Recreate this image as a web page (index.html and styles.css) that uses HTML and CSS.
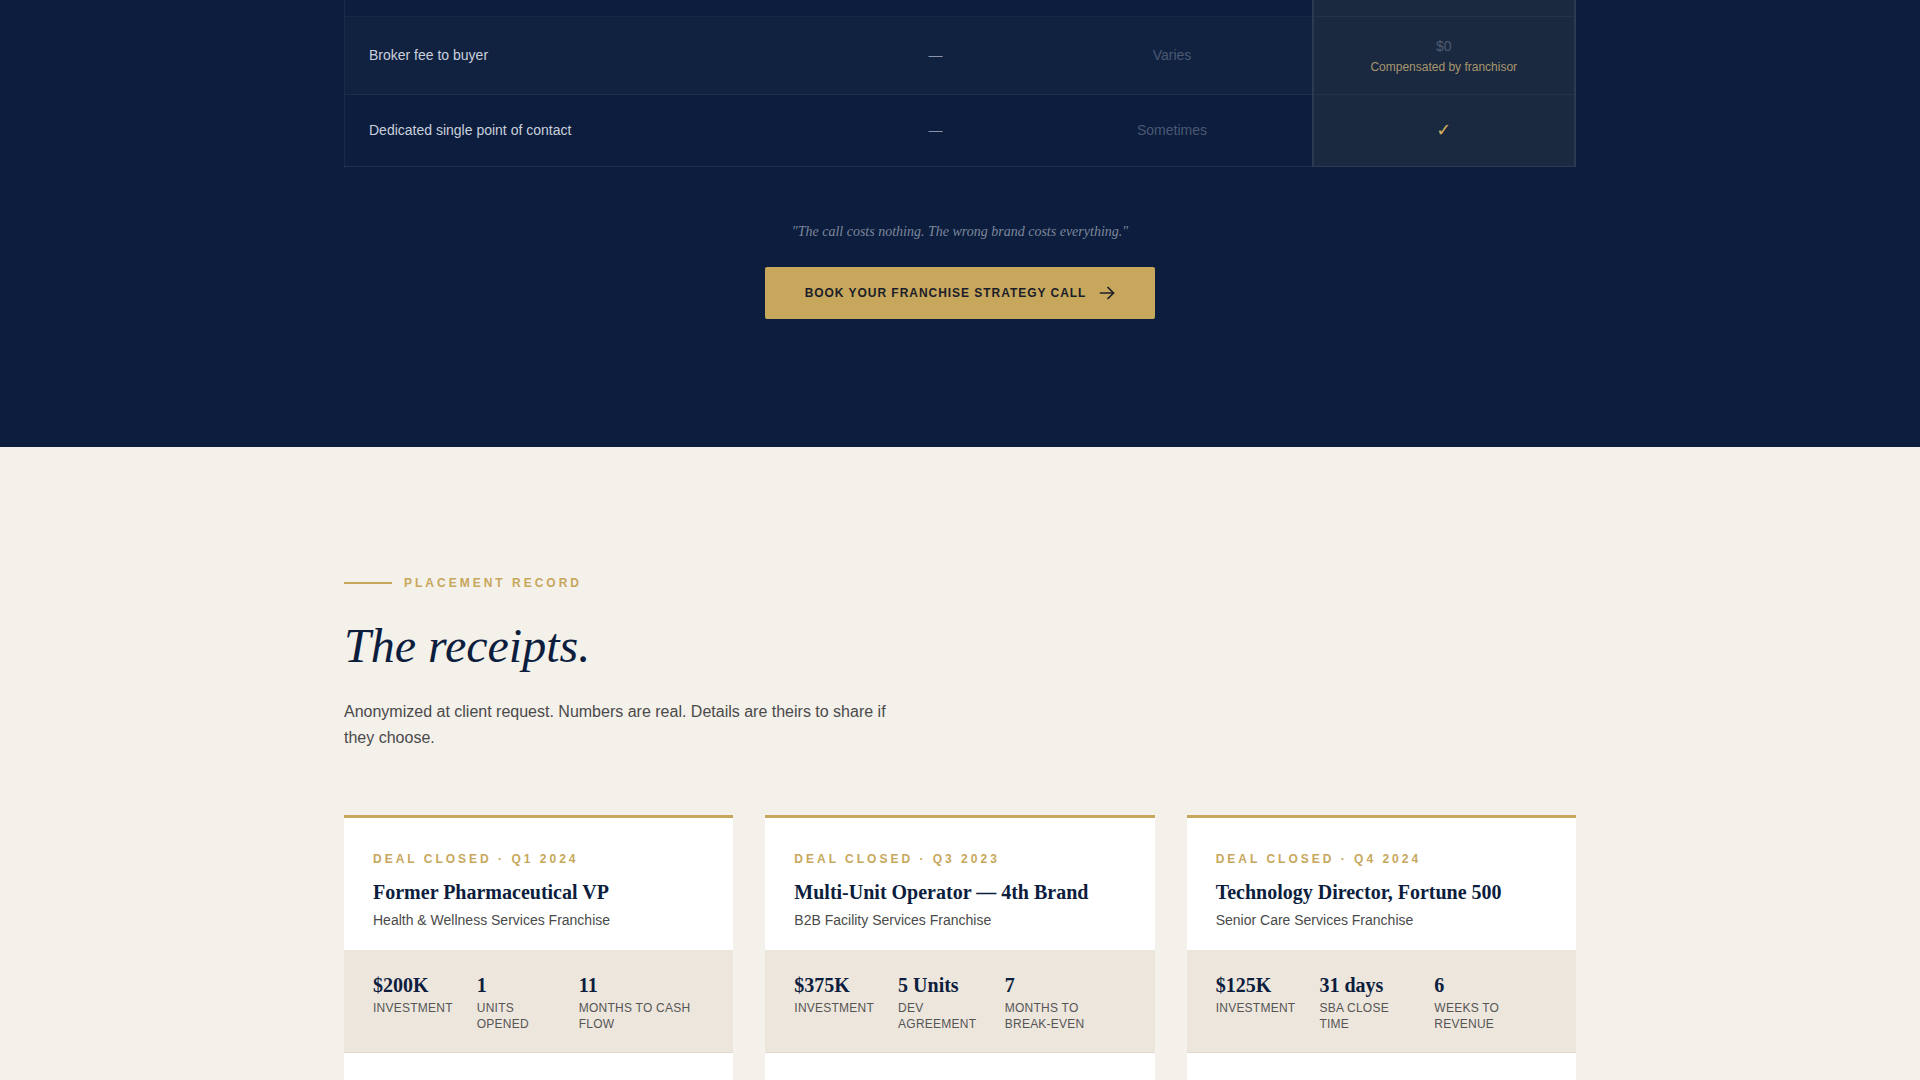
FILE: index.html
```html
<!DOCTYPE html>
<html lang="en">
<head>
  <meta charset="UTF-8" />
  <meta name="viewport" content="width=device-width, initial-scale=1.0"/>
  <title>Franchise Placement | Compare &amp; Record</title>
  <link rel="stylesheet" href="styles.css">
</head>
<body>

  <section class="compare-section">
    <div class="wrap">
      <table class="compare">
        <colgroup>
          <col class="c-label"><col class="c-diy"><col class="c-broker"><col class="c-ours">
        </colgroup>
        <tbody>
          <tr class="lead-in">
            <td></td><td></td><td></td><td class="ours"></td>
          </tr>
          <tr class="alt">
            <td class="label">Broker fee to buyer</td>
            <td class="dash">—</td>
            <td class="dim">Varies</td>
            <td class="ours fee">
              <span class="fee-val">$0</span>
              <span class="fee-note">Compensated by franchisor</span>
            </td>
          </tr>
          <tr>
            <td class="label">Dedicated single point of contact</td>
            <td class="dash">—</td>
            <td class="dim">Sometimes</td>
            <td class="ours"><span class="check">✓</span></td>
          </tr>
        </tbody>
      </table>

      <p class="closing-quote">"The call costs nothing. The wrong brand costs everything."</p>

      <div class="cta-row">
        <a class="cta" href="#book">
          Book your franchise strategy call
          <svg width="16" height="16" viewBox="0 0 16 16" fill="none" stroke="currentColor" stroke-width="1.7" stroke-linecap="round" stroke-linejoin="round">
            <path d="M1.5 8h13"/>
            <path d="M9 2.5L14.5 8 9 13.5"/>
          </svg>
        </a>
      </div>
    </div>
  </section>

  <section class="record-section">
    <div class="wrap">
      <div class="eyebrow"><span class="eyebrow-line"></span>Placement Record</div>
      <h2 class="record-title">The receipts.</h2>
      <p class="record-lead">Anonymized at client request. Numbers are real. Details are theirs to share if they choose.</p>

      <div class="deals">
        <article class="deal">
          <div class="deal-head">
            <div class="deal-tag">Deal Closed · Q1 2024</div>
            <h3 class="deal-title">Former Pharmaceutical VP</h3>
            <div class="deal-sub">Health &amp; Wellness Services Franchise</div>
          </div>
          <div class="deal-stats">
            <div class="stat"><div class="stat-val">$200K</div><div class="stat-label">Investment</div></div>
            <div class="stat"><div class="stat-val">1</div><div class="stat-label">Units opened</div></div>
            <div class="stat"><div class="stat-val">11</div><div class="stat-label">Months to cash flow</div></div>
          </div>
        </article>

        <article class="deal">
          <div class="deal-head">
            <div class="deal-tag">Deal Closed · Q3 2023</div>
            <h3 class="deal-title">Multi-Unit Operator — 4th Brand</h3>
            <div class="deal-sub">B2B Facility Services Franchise</div>
          </div>
          <div class="deal-stats">
            <div class="stat"><div class="stat-val">$375K</div><div class="stat-label">Investment</div></div>
            <div class="stat"><div class="stat-val">5 Units</div><div class="stat-label">Dev agreement</div></div>
            <div class="stat"><div class="stat-val">7</div><div class="stat-label">Months to break-even</div></div>
          </div>
        </article>

        <article class="deal">
          <div class="deal-head">
            <div class="deal-tag">Deal Closed · Q4 2024</div>
            <h3 class="deal-title">Technology Director, Fortune 500</h3>
            <div class="deal-sub">Senior Care Services Franchise</div>
          </div>
          <div class="deal-stats">
            <div class="stat"><div class="stat-val">$125K</div><div class="stat-label">Investment</div></div>
            <div class="stat"><div class="stat-val">31 days</div><div class="stat-label">SBA close time</div></div>
            <div class="stat"><div class="stat-val">6</div><div class="stat-label">Weeks to revenue</div></div>
          </div>
        </article>
      </div>
    </div>
  </section>

</body>
</html>
```

FILE: styles.css
```css
:root {
  --navy: #0c1d3d;
  --gold: #c7a75c;
  --cream: #f4f0ea;
  --band: #ede6dd;
  --ink: #4a4a4a;
}
body {
  margin: 0;
  font-family: "Liberation Sans", Arial, sans-serif;
  color: var(--ink);
  background: var(--cream);
}
.wrap {
  max-width: 1280px;
  margin: 0 auto;
  padding: 0 24px;
  box-sizing: border-box;
}

/* dark comparison block */
.compare-section {
  background: var(--navy);
  padding-bottom: 128px;
}
.compare {
  width: 100%;
  border-collapse: collapse;
  table-layout: fixed;
  border-left: 1px solid rgba(255, 255, 255, 0.06);
  border-bottom: 1px solid rgba(255, 255, 255, 0.09);
}
.c-label { width: 494px; }
.c-diy { width: 194px; }
.c-broker { width: 280px; }
.compare td {
  padding: 24px;
  font-size: 14px;
  line-height: 21px;
  text-align: center;
  vertical-align: middle;
  border-top: 1px solid rgba(255, 255, 255, 0.05);
}
/* tail of the rows above the fold */
.compare tr.lead-in td {
  padding: 0;
  height: 16px;
  border-top: 0;
}
.compare tr.alt td { background: rgba(255, 255, 255, 0.022); }
.compare td.label { text-align: left; color: #c9d0dc; }
.compare td.dash { color: #8a94a8; }
.compare td.dim { color: #4a5872; }
.compare td.ours,
.compare tr.alt td.ours {
  background: #1a2840;
  border-left: 2px solid #2b3a51;
  border-right: 2px solid #2b3a51;
}
.compare td.fee { padding: 20px 24px 18px; }
.fee-val {
  display: block;
  color: #4e5c72;
  line-height: 18px;
}
.fee-note {
  display: block;
  margin-top: 4px;
  font-size: 12px;
  line-height: 17px;
  color: #a8976c;
}
.check {
  font-family: "DejaVu Sans", sans-serif;
  font-size: 18px;
  font-weight: bold;
  color: #d2b25e;
}
.closing-quote {
  margin: 53px 0 0;
  text-align: center;
  font-family: "Liberation Serif", "Times New Roman", serif;
  font-style: italic;
  font-size: 14px;
  line-height: 24px;
  color: #7d879b;
}
.cta-row {
  display: flex;
  justify-content: center;
  margin-top: 23px;
}
.cta {
  display: flex;
  align-items: center;
  gap: 13px;
  padding: 18px 40px;
  background: var(--gold);
  border-radius: 2px;
  color: #1b1e29;
  font-size: 12px;
  line-height: 15px;
  font-weight: bold;
  letter-spacing: 0.08em;
  text-transform: uppercase;
  text-decoration: none;
}

/* placement record */
.record-section { padding: 128px 0; }
.eyebrow {
  display: flex;
  align-items: center;
  gap: 12px;
  font-size: 12px;
  line-height: 16px;
  font-weight: bold;
  letter-spacing: 3px;
  text-transform: uppercase;
  color: var(--gold);
}
.eyebrow-line {
  width: 48px;
  height: 2px;
  background: var(--gold);
}
.record-title {
  margin: 26px 0 24px;
  font-family: "Liberation Serif", "Times New Roman", serif;
  font-style: italic;
  font-weight: normal;
  font-size: 48px;
  line-height: 1.2;
  color: var(--navy);
}
.record-lead {
  margin: 0;
  max-width: 560px;
  font-size: 16px;
  line-height: 26px;
}
.deals {
  display: grid;
  grid-template-columns: repeat(3, 1fr);
  gap: 32px;
  margin-top: 64px;
}
.deal {
  background: #fff;
  border-top: 3px solid var(--gold);
  padding-bottom: 72px;
}
.deal-head { padding: 33px 28px 20px 29px; }
.deal-tag {
  font-size: 12px;
  line-height: 16px;
  font-weight: bold;
  letter-spacing: 3px;
  text-transform: uppercase;
  color: var(--gold);
  margin-bottom: 12px;
}
.deal-title {
  margin: 0;
  font-family: "Liberation Serif", "Times New Roman", serif;
  font-size: 20px;
  line-height: 26px;
  color: var(--navy);
}
.deal-sub {
  margin-top: 5px;
  font-size: 14px;
  line-height: 20px;
}
.deal-stats {
  display: flex;
  gap: 24px;
  padding: 23px 28px 20px 29px;
  background: var(--band);
  border-bottom: 1px solid #e0d8cd;
}
.stat-val {
  font-family: "Liberation Serif", "Times New Roman", serif;
  font-size: 20px;
  line-height: 24px;
  font-weight: bold;
  color: var(--navy);
}
.stat-label {
  margin-top: 3px;
  font-size: 12px;
  line-height: 16px;
  letter-spacing: 0.02em;
  text-transform: uppercase;
  color: #555;
}
```
